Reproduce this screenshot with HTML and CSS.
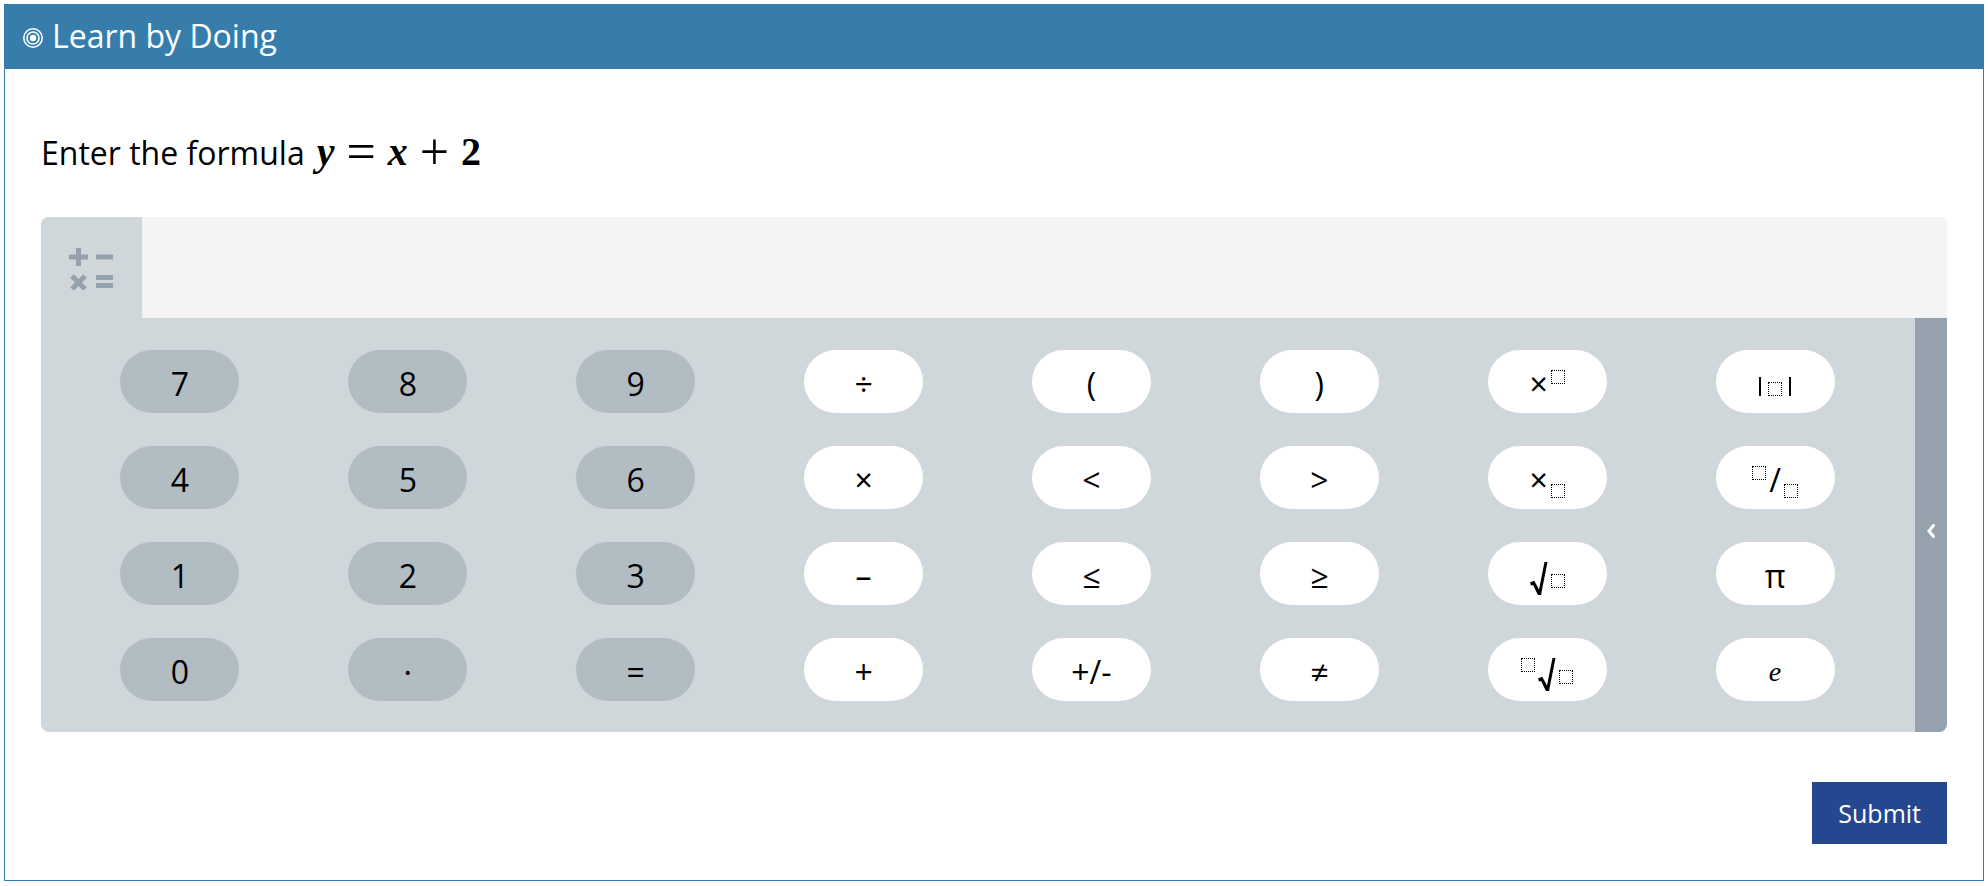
FILE: index.html
```
<!DOCTYPE html>
<html lang="en">
<head>
    <meta charset="UTF-8">
    <meta name="viewport" content="width=device-width, initial-scale=1.0">
    <title>Learn by Doing</title>
    <link rel="stylesheet" href="styles.css">
</head>
<body>
    <!-- Shared root sign -->
    <svg width="0" height="0" class="defs" aria-hidden="true">
        <symbol id="root" viewBox="0 0 18 33">
            <path d="M0 20.6 4.200 18.800 9 27.500 14.500 0H17.500L11 33H8L3 23 1 23.600z"/>
        </symbol>
    </svg>

    <main class="activity">
        <header class="activity-header">
            <svg class="target" viewBox="0 0 20 20" aria-hidden="true">
                <circle cx="10" cy="10" r="9.2"/>
                <circle cx="10" cy="10" r="6"/>
                <circle cx="10" cy="10" r="3.2" class="target-dot"/>
            </svg>
            <h1>Learn by Doing</h1>
        </header>

        <div class="activity-body">
            <label class="question" for="formula">Enter the formula
                <span class="math"><i>y</i><span class="op">=</span><i>x</i><span class="op">+</span><b>2</b></span>
            </label>

            <div class="editor">
                <div class="editor-top">
                    <button type="button" class="toggle" aria-label="Toggle keypad">
                        <svg viewBox="0 0 44 42" aria-hidden="true">
                            <path d="M0 9H19M9.5 0V18M27 9H44M3 28 16 41M16 28 3 41M27 29.5H44M27 37.5H44"/>
                        </svg>
                    </button>
                    <input type="text" id="formula" class="formula" autocomplete="off">
                </div>
                <div class="keypad">
                    <div class="keys">
                        <button type="button" class="key number">7</button>
                        <button type="button" class="key number">8</button>
                        <button type="button" class="key number">9</button>
                        <button type="button" class="key">÷</button>
                        <button type="button" class="key">(</button>
                        <button type="button" class="key">)</button>
                        <button type="button" class="key" aria-label="Superscript"><span class="template">×<span class="box sup"></span></span></button>
                        <button type="button" class="key" aria-label="Absolute value"><span class="template wide"><span class="bar"></span><span class="box"></span><span class="bar"></span></span></button>

                        <button type="button" class="key number">4</button>
                        <button type="button" class="key number">5</button>
                        <button type="button" class="key number">6</button>
                        <button type="button" class="key">×</button>
                        <button type="button" class="key">&lt;</button>
                        <button type="button" class="key">&gt;</button>
                        <button type="button" class="key" aria-label="Subscript"><span class="template">×<span class="box sub"></span></span></button>
                        <button type="button" class="key" aria-label="Fraction"><span class="template"><span class="box sup"></span>/<span class="box sub"></span></span></button>

                        <button type="button" class="key number">1</button>
                        <button type="button" class="key number">2</button>
                        <button type="button" class="key number">3</button>
                        <button type="button" class="key">–</button>
                        <button type="button" class="key">≤</button>
                        <button type="button" class="key">≥</button>
                        <button type="button" class="key" aria-label="Square root"><span class="template"><svg class="root"><use href="#root"/></svg><span class="box"></span></span></button>
                        <button type="button" class="key">π</button>

                        <button type="button" class="key number">0</button>
                        <button type="button" class="key number">·</button>
                        <button type="button" class="key number">=</button>
                        <button type="button" class="key">+</button>
                        <button type="button" class="key">+/-</button>
                        <button type="button" class="key">≠</button>
                        <button type="button" class="key" aria-label="Nth root"><span class="template"><span class="box sup"></span><svg class="root"><use href="#root"/></svg><span class="box"></span></span></button>
                        <button type="button" class="key"><span class="euler">e</span></button>
                    </div>
                    <button type="button" class="more" aria-label="More keys">
                        <svg viewBox="0 0 8 14" aria-hidden="true"><path d="M6.500 1.500 2 7l4.500 5.500"/></svg>
                    </button>
                </div>
            </div>

            <div class="actions">
                <button type="button" class="submit">Submit</button>
            </div>
        </div>
    </main>
</body>
</html>
```
FILE: styles.css
```
* {
    box-sizing: border-box;
}
body {
    font-family: "Open Sans", sans-serif;
    font-size: 32px;
    color: #000;
    background-color: #fff;
    margin: 4px;
}
button {
    border: none;
    padding: 0;
    font: inherit;
    color: inherit;
    cursor: pointer;
}
.defs {
    position: absolute;
}
.activity {
    border: 1px solid #377dab;
}
.activity-header {
    display: flex;
    align-items: center;
    gap: 9px;
    padding: 9px 18px 11px;
    background-color: #377dab;
    color: #fff;
}
.activity-header h1 {
    margin: 0;
    font-size: 32px;
    line-height: 44px;
    font-weight: 400;
}
.target {
    width: 20px;
    height: 20px;
    margin-top: 4px;
    fill: none;
    stroke: #fff;
    stroke-width: 1.6;
}
.target .target-dot {
    fill: #fff;
    stroke: none;
}
.activity-body {
    padding: 55px 36px 36px;
}
.question {
    display: flex;
    align-items: baseline;
    gap: 12px;
    line-height: 56px;
}
.math {
    display: flex;
    align-items: center;
    gap: 12px;
    font-family: "Liberation Serif", serif;
    font-size: 40px;
    font-weight: 700;
}
.math .op {
    font-size: 52px;
    font-weight: 400;
}

/* Editor */
.editor {
    margin-top: 36px;
    border-radius: 8px;
    overflow: hidden;
    background-color: #d0d7da;
}
.editor-top {
    display: flex;
    height: 101px;
}
.toggle {
    width: 101px;
    background-color: #d0d7da;
}
.toggle svg {
    display: block;
    width: 44px;
    height: 42px;
    margin: 2px auto 0 28px;
    fill: none;
    stroke: #95a2ad;
    stroke-width: 5;
}
.formula {
    flex: 1;
    border: none;
    padding: 0 20px;
    font: inherit;
    background-color: #f4f4f4;
}
.keypad {
    display: flex;
}
.keys {
    flex: 1;
    display: grid;
    grid-template-columns: repeat(8, 1fr);
    justify-items: center;
    row-gap: 33px;
    padding: 32px 26px 31px 25px;
}
.key {
    display: flex;
    justify-content: center;
    width: 119px;
    height: 63px;
    border-radius: 32px;
    background-color: #fff;
    line-height: 67px;
}
.number {
    background-color: #b1bcc3;
}
.template {
    display: flex;
    align-items: flex-start;
    gap: 3px;
}
.wide {
    gap: 7px;
}
.box {
    width: 14px;
    height: 14px;
    margin-top: 32px;
    border: 1px dotted #000;
}
.sup {
    margin-top: 20px;
}
.sub {
    margin-top: 38px;
}
.bar {
    width: 2px;
    height: 19px;
    margin-top: 27px;
    background-color: #000;
}
.root {
    width: 18px;
    height: 33px;
    margin-top: 20px;
}
.euler {
    font-family: "Liberation Serif", serif;
    font-size: 28px;
    font-style: italic;
}
.more {
    width: 32px;
    background-color: #95a2ad;
}
.more svg {
    width: 8px;
    height: 14px;
    fill: none;
    stroke: #fff;
    stroke-width: 3;
    stroke-linecap: round;
}
.actions {
    display: flex;
    justify-content: flex-end;
    margin-top: 50px;
}
.submit {
    padding: 13px 26px;
    font-size: 25px;
    line-height: 36px;
    color: #fff;
    background-color: #24478f;
}
```
